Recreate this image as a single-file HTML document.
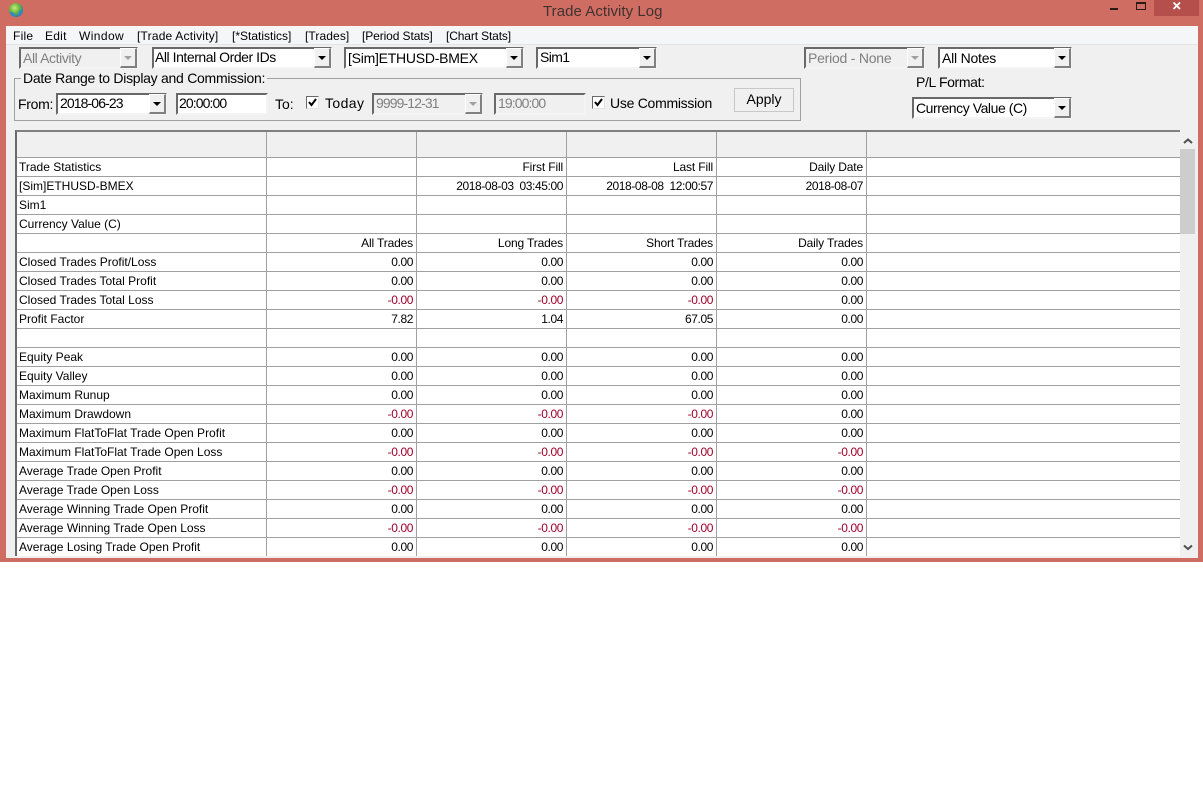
<!DOCTYPE html>
<html><head><meta charset="utf-8"><style>
html,body{margin:0;padding:0;background:#fff;width:1203px;height:801px;overflow:hidden}
body{position:relative;font-family:"Liberation Sans",sans-serif;color:#000}
.a{position:absolute;white-space:pre}
#frame{left:0;top:0;width:1203px;height:562px;background:#d06d63}
#in{left:6px;top:26px;width:1192px;height:532px;background:#f0f0f0}
#menu{left:6px;top:26px;width:1192px;height:18px;background:#f5f6f7;border-bottom:1px solid #e3e3e3}
.m{font-size:12px;top:29px;line-height:14px;color:#000}
.c{position:absolute;box-sizing:border-box;background:#fff;border:2px solid;border-color:#696969 #f4f4f4 #f4f4f4 #696969;height:22px;font-size:14px;line-height:18px;padding-left:2px;white-space:pre}
.c.d{background:#f0f0f0;color:#808080}
.c.u{line-height:16px}
.b{position:absolute;right:-1px;top:-1px;width:17px;height:20px;background:#f0f0f0;border-right:2px solid #808080;border-bottom:2px solid #808080;border-top:1px solid #fff;border-left:1px solid #fff;box-sizing:border-box}
.b:after{content:"";position:absolute;left:3px;top:7px;border:4px solid transparent;border-top:4px solid #000;border-bottom:0}
.d .b:after{border-top-color:#a0a0a0}
.t{font-size:14px;line-height:16px}
.dt{font-size:14px;letter-spacing:-.9px;line-height:17px}
.cb{position:absolute;box-sizing:border-box;width:13px;height:13px;background:#fff;border:1px solid;border-color:#696969 #e3e3e3 #e3e3e3 #696969}
#grp{left:14px;top:78px;width:785px;height:41px;border:1px solid #a0a0a0}
#grid{left:15px;top:130px;width:1163px;height:424px;overflow:hidden;background:#fff;border-left:2px solid #696969;border-top:2px solid #808080;box-sizing:content-box}
table{border-collapse:separate;border-spacing:0;table-layout:fixed;width:1163px;font-size:12px;letter-spacing:-.4px}
td{box-sizing:border-box;height:19px;padding:0 3px;border-right:1px solid #a0a0a0;border-bottom:1px solid #a0a0a0;white-space:pre;text-align:right;line-height:17px;overflow:hidden;color:#000}
tr.l td{letter-spacing:-.15px}
td:first-child,tr.l td:first-child{text-align:left;padding-left:2px;letter-spacing:0}
td:last-child{border-right:0}
tr.h td{height:26px;background:#f0f0f0}
.n{color:#a0002a}
#sb{left:1180px;top:132px;width:16px;height:425px;background:#f0f0f0}
#th{left:1180px;top:149px;width:15px;height:85px;background:#cdcdcd}
</style></head><body>
<div class="a" id="frame"></div>
<div class="a" id="in"></div>
<svg class="a" style="left:8px;top:2px" width="18" height="18" viewBox="0 0 18 18"><defs><radialGradient id="g" cx=".4" cy=".35" r=".7"><stop offset="0" stop-color="#c8ea80"/><stop offset=".5" stop-color="#6cb83c"/><stop offset="1" stop-color="#1f6fb8"/></radialGradient></defs><circle cx="8" cy="8" r="7" fill="url(#g)"/><path d="M2 10C4 9 6 11 8 14.500 5 15 3 13 2 10Z" fill="#2c8ad0"/><path d="M11 9c2-1 3-1 3.500-1-.5 3-2 5-4 6z" fill="#2c8ad0"/></svg>
<div class="a" style="left:543px;top:3px;font-size:15px;line-height:17px;color:#3f3330;letter-spacing:.05px">Trade Activity Log</div>
<div class="a" style="left:1110px;top:8px;width:8px;height:2px;background:#2a1a18"></div>
<div class="a" style="left:1136px;top:2px;width:8px;height:5px;border:1px solid #2a1a18;border-top:2px solid #2a1a18"></div>
<div class="a" style="left:1154px;top:0;width:45px;height:16px;background:#b54f4c"></div>
<svg class="a" style="left:1172px;top:1px" width="10" height="10" viewBox="0 0 10 10"><path d="M1.500 1.500L8 8M8 1.500L1.500 8" stroke="#fff" stroke-width="1.700" fill="none"/></svg>

<div class="a" id="menu"></div>
<div class="a m" style="left:13px;letter-spacing:.25px">File</div>
<div class="a m" style="left:45px;letter-spacing:.25px">Edit</div>
<div class="a m" style="left:79px;letter-spacing:.4px">Window</div>
<div class="a m" style="left:137px;letter-spacing:.2px">[Trade Activity]</div>
<div class="a m" style="left:232px">[*Statistics]</div>
<div class="a m" style="left:305px;letter-spacing:.1px">[Trades]</div>
<div class="a m" style="left:362px;letter-spacing:-.1px">[Period Stats]</div>
<div class="a m" style="left:446px;letter-spacing:-.13px">[Chart Stats]</div>

<div class="c d" style="left:19px;top:47px;width:119px;letter-spacing:-.4px">All Activity<span class="b"></span></div>
<div class="c u" style="left:152px;top:47px;width:180px;padding-left:1px;letter-spacing:-.45px">All Internal Order IDs<span class="b"></span></div>
<div class="c" style="left:344px;top:47px;width:180px;letter-spacing:-.25px">[Sim]ETHUSD-BMEX<span class="b"></span></div>
<div class="c u" style="left:536px;top:47px;width:121px;letter-spacing:-.6px">Sim1<span class="b"></span></div>
<div class="c d" style="left:804px;top:47px;width:121px;letter-spacing:-.23px">Period - None<span class="b"></span></div>
<div class="c" style="left:938px;top:47px;width:134px;letter-spacing:-.22px">All Notes<span class="b"></span></div>
<div class="a t" style="left:916px;top:74px;letter-spacing:-.36px">P/L Format:</div>
<div class="c" style="left:912px;top:97px;width:160px;letter-spacing:-.44px">Currency Value (C)<span class="b"></span></div>

<div class="a" id="grp"></div>
<div class="a t" style="left:21px;top:70px;background:#f0f0f0;padding:0 2px;letter-spacing:-.27px">Date Range to Display and Commission:</div>
<div class="a t" style="left:18px;top:96px;letter-spacing:-.3px">From:</div>
<div class="c dt" style="left:56px;top:93px;width:111px">2018-06-23<span class="b"></span></div>
<div class="c dt" style="left:176px;top:93px;width:92px;padding-left:1px">20:00:00</div>
<div class="a t" style="left:275px;top:96px">To:</div>
<div class="cb" style="left:306px;top:96px"><svg width="11" height="11" style="display:block"><path d="M2 5l2.500 3L9 2" stroke="#000" stroke-width="2" fill="none"/></svg></div>
<div class="a t" style="left:325px;top:95px;letter-spacing:.4px">Today</div>
<div class="c d dt" style="left:372px;top:93px;width:111px">9999-12-31<span class="b"></span></div>
<div class="c d dt" style="left:494px;top:93px;width:92px">19:00:00</div>
<div class="cb" style="left:592px;top:96px"><svg width="11" height="11" style="display:block"><path d="M2 5l2.500 3L9 2" stroke="#000" stroke-width="2" fill="none"/></svg></div>
<div class="a t" style="left:610px;top:95px;letter-spacing:-.27px">Use Commission</div>
<div class="a t" style="left:734px;top:88px;width:60px;height:24px;box-sizing:border-box;background:#f0f0f0;border:1px solid;border-color:#fff #696969 #696969 #fff;outline:1px solid #c8c8c8;outline-offset:-1px;text-align:center;line-height:21px">Apply</div>

<div class="a" id="grid"><table><colgroup><col style="width:250px"><col style="width:150px"><col style="width:150px"><col style="width:150px"><col style="width:150px"><col style="width:313px"></colgroup>
<tr class="h"><td></td><td></td><td></td><td></td><td></td><td></td></tr>
<tr class="l"><td>Trade Statistics</td><td></td><td>First Fill</td><td>Last Fill</td><td>Daily Date</td><td></td></tr>
<tr><td>[Sim]ETHUSD-BMEX</td><td></td><td>2018-08-03  03:45:00</td><td>2018-08-08  12:00:57</td><td>2018-08-07</td><td></td></tr>
<tr><td>Sim1</td><td></td><td></td><td></td><td></td><td></td></tr>
<tr><td>Currency Value (C)</td><td></td><td></td><td></td><td></td><td></td></tr>
<tr class="l"><td></td><td>All Trades</td><td>Long Trades</td><td>Short Trades</td><td>Daily Trades</td><td></td></tr>
<tr><td>Closed Trades Profit/Loss</td><td>0.00</td><td>0.00</td><td>0.00</td><td>0.00</td><td></td></tr>
<tr><td>Closed Trades Total Profit</td><td>0.00</td><td>0.00</td><td>0.00</td><td>0.00</td><td></td></tr>
<tr><td>Closed Trades Total Loss</td><td class="n">-0.00</td><td class="n">-0.00</td><td class="n">-0.00</td><td>0.00</td><td></td></tr>
<tr><td>Profit Factor</td><td>7.82</td><td>1.04</td><td>67.05</td><td>0.00</td><td></td></tr>
<tr><td></td><td></td><td></td><td></td><td></td><td></td></tr>
<tr><td>Equity Peak</td><td>0.00</td><td>0.00</td><td>0.00</td><td>0.00</td><td></td></tr>
<tr><td>Equity Valley</td><td>0.00</td><td>0.00</td><td>0.00</td><td>0.00</td><td></td></tr>
<tr><td>Maximum Runup</td><td>0.00</td><td>0.00</td><td>0.00</td><td>0.00</td><td></td></tr>
<tr><td>Maximum Drawdown</td><td class="n">-0.00</td><td class="n">-0.00</td><td class="n">-0.00</td><td>0.00</td><td></td></tr>
<tr><td>Maximum FlatToFlat Trade Open Profit</td><td>0.00</td><td>0.00</td><td>0.00</td><td>0.00</td><td></td></tr>
<tr><td>Maximum FlatToFlat Trade Open Loss</td><td class="n">-0.00</td><td class="n">-0.00</td><td class="n">-0.00</td><td class="n">-0.00</td><td></td></tr>
<tr><td>Average Trade Open Profit</td><td>0.00</td><td>0.00</td><td>0.00</td><td>0.00</td><td></td></tr>
<tr><td>Average Trade Open Loss</td><td class="n">-0.00</td><td class="n">-0.00</td><td class="n">-0.00</td><td class="n">-0.00</td><td></td></tr>
<tr><td>Average Winning Trade Open Profit</td><td>0.00</td><td>0.00</td><td>0.00</td><td>0.00</td><td></td></tr>
<tr><td>Average Winning Trade Open Loss</td><td class="n">-0.00</td><td class="n">-0.00</td><td class="n">-0.00</td><td class="n">-0.00</td><td></td></tr>
<tr><td>Average Losing Trade Open Profit</td><td>0.00</td><td>0.00</td><td>0.00</td><td>0.00</td><td></td></tr>
</table></div>
<div class="a" id="sb"></div>
<div class="a" id="th"></div>
<svg class="a" style="left:1183px;top:138px" width="10" height="7"><path d="M1 5l4-3.500L9 5" stroke="#505050" stroke-width="2" fill="none"/></svg>
<svg class="a" style="left:1183px;top:544px" width="10" height="7"><path d="M1 1.500L5 5l4-3.500" stroke="#505050" stroke-width="2" fill="none"/></svg>
</body></html>
